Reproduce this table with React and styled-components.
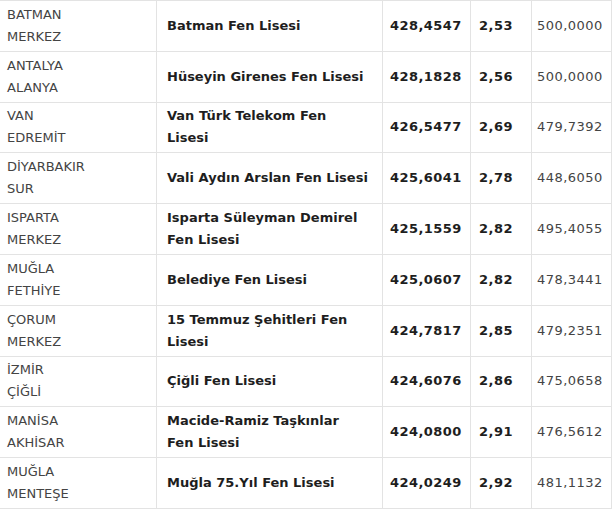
import React from "react";
import styled, { createGlobalStyle } from "styled-components";

const GlobalStyle = createGlobalStyle`
  body {
    margin: 0;
    background: #fff;
    font-family: "DejaVu Sans", Verdana, sans-serif;
  }
`;

const Table = styled.div`
  width: 612px;
  border-top: 1px solid #e3e3e3;
  font-size: 13px;
  line-height: 22px;
`;

const Row = styled.div`
  display: grid;
  grid-template-columns: 157px 226px 88px 61px 80px;
  height: 50.8px;
  box-sizing: border-box;
  border-bottom: 1px solid #e3e3e3;
`;

const Cell = styled.div`
  display: flex;
  align-items: center;
  box-sizing: border-box;
  border-right: 1px solid #e3e3e3;
  padding-left: ${(p) => p.$pad}px;
  color: ${(p) => (p.$bold ? "#1e1e1e" : "#444")};
  font-weight: ${(p) => (p.$bold ? 700 : 400)};
  letter-spacing: ${(p) => (p.$num ? "0.45px" : "0")};
  white-space: nowrap;
`;

const rows = [
  ["BATMAN", "MERKEZ", ["Batman Fen Lisesi"], "428,4547", "2,53", "500,0000"],
  ["ANTALYA", "ALANYA", ["Hüseyin Girenes Fen Lisesi"], "428,1828", "2,56", "500,0000"],
  ["VAN", "EDREMİT", ["Van Türk Telekom Fen", "Lisesi"], "426,5477", "2,69", "479,7392"],
  ["DİYARBAKIR", "SUR", ["Vali Aydın Arslan Fen Lisesi"], "425,6041", "2,78", "448,6050"],
  ["ISPARTA", "MERKEZ", ["Isparta Süleyman Demirel", "Fen Lisesi"], "425,1559", "2,82", "495,4055"],
  ["MUĞLA", "FETHİYE", ["Belediye Fen Lisesi"], "425,0607", "2,82", "478,3441"],
  ["ÇORUM", "MERKEZ", ["15 Temmuz Şehitleri Fen", "Lisesi"], "424,7817", "2,85", "479,2351"],
  ["İZMİR", "ÇİĞLİ", ["Çiğli Fen Lisesi"], "424,6076", "2,86", "475,0658"],
  ["MANİSA", "AKHİSAR", ["Macide-Ramiz Taşkınlar", "Fen Lisesi"], "424,0800", "2,91", "476,5612"],
  ["MUĞLA", "MENTEŞE", ["Muğla 75.Yıl Fen Lisesi"], "424,0249", "2,92", "481,1132"],
];

const Lines = ({ items }) => (
  <div>
    {items.map((t, i) => (
      <div key={i}>{t}</div>
    ))}
  </div>
);

export default function App() {
  return (
    <>
      <GlobalStyle />
      <Table>
        {rows.map(([city, town, school, score, pct, base], i) => (
          <Row key={i}>
            <Cell $pad={7}>
              <Lines items={[city, town]} />
            </Cell>
            <Cell $pad={10} $bold>
              <Lines items={school} />
            </Cell>
            <Cell $pad={7} $bold $num>{score}</Cell>
            <Cell $pad={8} $bold $num>{pct}</Cell>
            <Cell $pad={5} $num>{base}</Cell>
          </Row>
        ))}
      </Table>
    </>
  );
}
